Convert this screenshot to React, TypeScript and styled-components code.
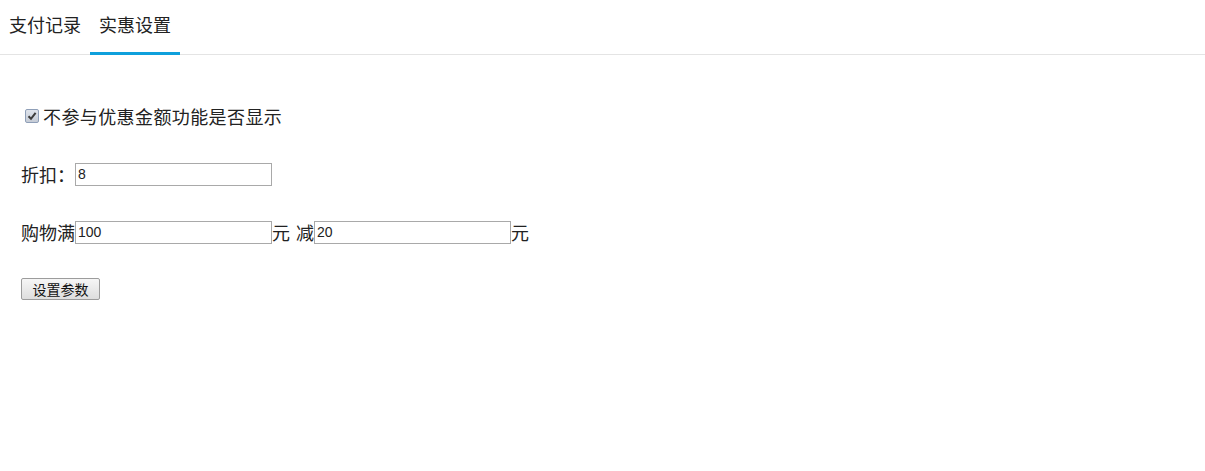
import { useState } from 'react';
import styled, { createGlobalStyle } from 'styled-components';

const GlobalStyle = createGlobalStyle`
    html, body {
        margin: 0;
        padding: 0;
        background: #fff;
    }
    body {
        font-family: "Noto Sans CJK SC", "Liberation Sans", sans-serif;
        color: #222;
    }
`;

// Tab bar
const TabBar = styled.div`
    display: flex;
    border-bottom: 1px solid #e4e4e4;
`;

const Tab = styled.div<{ $active?: boolean }>`
    height: 52px;
    line-height: 48px;
    padding: 0 9px;
    margin-bottom: -1px;
    font-size: 18px;
    color: #222;
    cursor: pointer;
    border-bottom: 3px solid ${(p) => (p.$active ? '#0ea0dc' : 'transparent')};
`;

// Form content
const Content = styled.div`
    display: flex;
    flex-direction: column;
    gap: 34px;
    padding: 49px 0 0 21px;
`;

const Row = styled.div`
    display: flex;
    align-items: center;
    height: 24px;
    font-size: 18px;
    white-space: pre;
`;

const CheckLabel = styled.label`
    display: flex;
    align-items: center;
    font-size: 18px;
    letter-spacing: 0.4px;
    cursor: pointer;
`;

const HiddenCheck = styled.input`
    position: absolute;
    opacity: 0;
    width: 0;
    height: 0;
    margin: 0;
`;

const CheckBox = styled.span<{ $checked: boolean }>`
    box-sizing: border-box;
    display: inline-flex;
    align-items: center;
    justify-content: center;
    width: 14px;
    height: 14px;
    margin: 0 4px 0 4px;
    border: 1px solid #8f9fb8;
    border-radius: 2px;
    background: linear-gradient(#dfe4ec, #c6ccd6);
    svg {
        visibility: ${(p) => (p.$checked ? 'visible' : 'hidden')};
    }
`;

const Gap = styled.span`
    display: inline-block;
    width: 6px;
`;

const TextInput = styled.input`
    box-sizing: border-box;
    width: 197px;
    height: 23px;
    padding: 1px 2px;
    border: 1px solid #a9a9a9;
    font-family: "Liberation Sans", Arial, sans-serif;
    font-size: 14px;
    color: #222;
    outline: none;
`;

const ButtonRow = styled.div`
    margin-top: -2px;
`;

const Button = styled.button`
    box-sizing: border-box;
    height: 22px;
    width: 79px;
    padding: 0 6px;
    border: 1px solid #9c9c9c;
    border-radius: 2px;
    background: linear-gradient(#f6f6f6, #dedede);
    font-family: "Noto Sans CJK SC", sans-serif;
    font-size: 14px;
    color: #111;
    line-height: 20px;
`;

export default function App() {
    const [tab, setTab] = useState(1);
    const [show, setShow] = useState(true);
    const [discount, setDiscount] = useState('8');
    const [full, setFull] = useState('100');
    const [minus, setMinus] = useState('20');

    return (
        <>
            <GlobalStyle />
            <TabBar>
                {['支付记录', '实惠设置'].map((t, i) => (
                    <Tab key={t} $active={tab === i} onClick={() => setTab(i)}>
                        {t}
                    </Tab>
                ))}
            </TabBar>
            <Content>
                <Row>
                    <CheckLabel>
                        <HiddenCheck type="checkbox" checked={show} onChange={(e) => setShow(e.target.checked)} />
                        <CheckBox $checked={show}>
                            <svg width="10" height="10" viewBox="0 0 10 10">
                                <path d="M1.5 5.2 L4 7.8 L8.6 1.8" fill="none" stroke="#3c3c3c" strokeWidth="2" />
                            </svg>
                        </CheckBox>
                        不参与优惠金额功能是否显示
                    </CheckLabel>
                </Row>
                <Row>
                    折扣：
                    <TextInput value={discount} onChange={(e) => setDiscount(e.target.value)} />
                </Row>
                <Row>
                    购物满
                    <TextInput value={full} onChange={(e) => setFull(e.target.value)} />
                    元<Gap />减
                    <TextInput value={minus} onChange={(e) => setMinus(e.target.value)} />
                    元
                </Row>
                <ButtonRow>
                    <Button>设置参数</Button>
                </ButtonRow>
            </Content>
        </>
    );
}
